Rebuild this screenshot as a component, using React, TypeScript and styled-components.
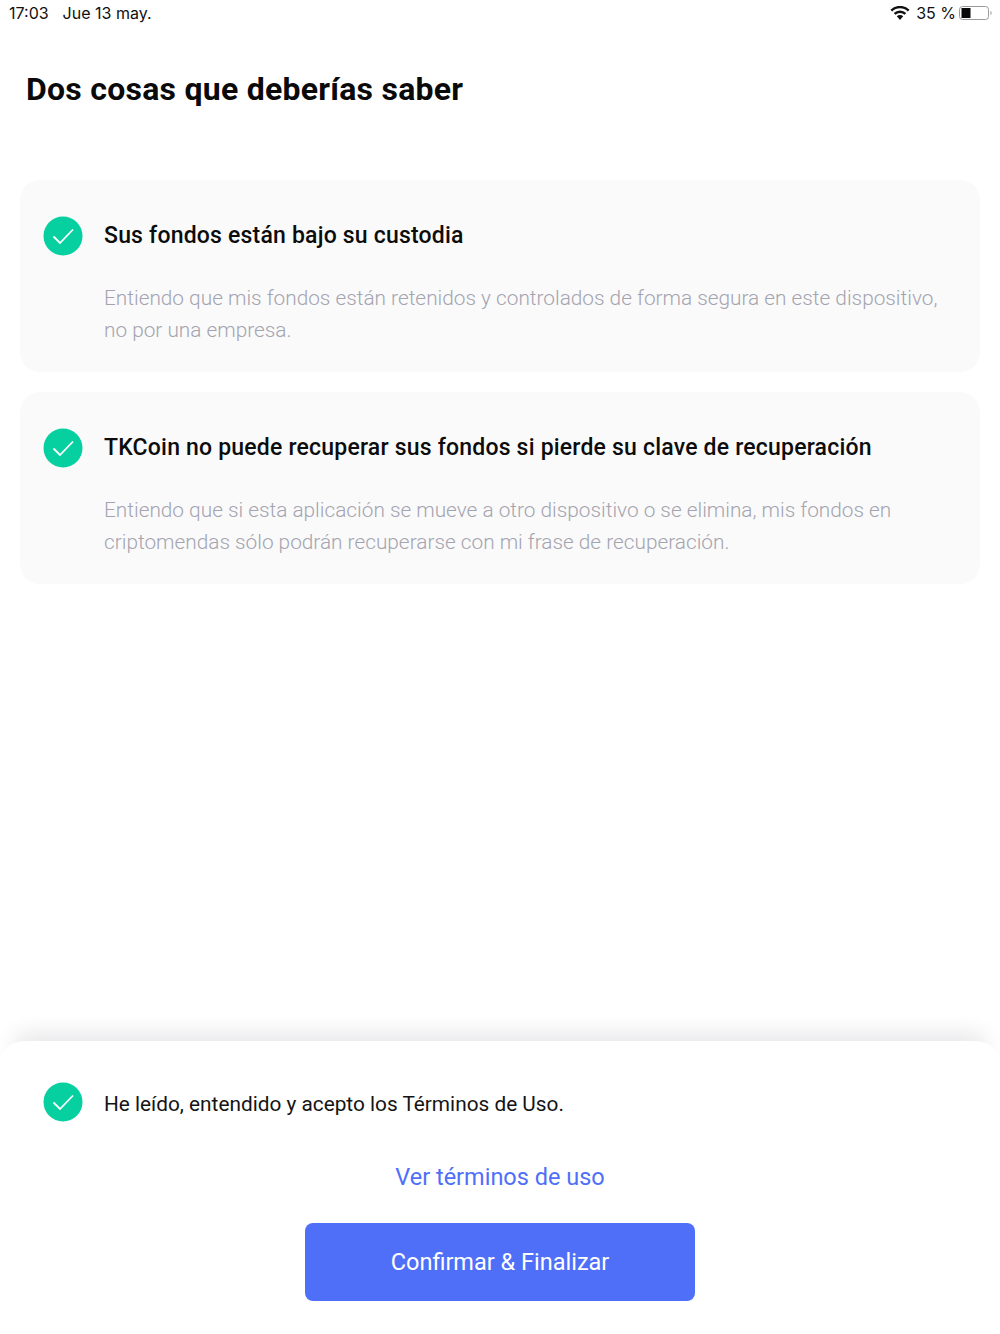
import styled, { createGlobalStyle } from "styled-components";

const GlobalStyle = createGlobalStyle`
  html, body {
    margin: 0;
    padding: 0;
    background: #fff;
  }
  * {
    box-sizing: border-box;
  }
`;

const Page = styled.div`
  width: 1000px;
  height: 1334px;
  display: flex;
  flex-direction: column;
  overflow: hidden;
  background: #fff;
  font-family: Roboto, "Liberation Sans", sans-serif;
`;

const StatusBar = styled.div`
  height: 26px;
  margin-bottom: 1px;
  padding: 0 7px 0 9px;
  display: flex;
  align-items: center;
  justify-content: space-between;
  font-family: Inter, "Liberation Sans", sans-serif;
  font-size: 16px;
  color: #111;
`;

const StatusGroup = styled.div`
  display: flex;
  align-items: center;
`;

const Clock = styled.span`
  margin-right: 14px;
`;

const Percent = styled.span`
  margin: 0 3px 0 6px;
`;

const Title = styled.h1`
  margin: 41px 0 0 26px;
  font-size: 32px;
  line-height: 42px;
  font-weight: 700;
  letter-spacing: 0.25px;
  color: #0a0a0a;
`;

const CardList = styled.div`
  margin-top: 70px;
  padding: 0 20px;
  display: flex;
  flex-direction: column;
  gap: 20px;
  flex: 1;
`;

const Card = styled.section`
  height: 192px;
  padding: 36px 23px 0;
  background: #fafafa;
  border-radius: 20px;
`;

const Row = styled.div`
  display: flex;
  align-items: center;
  gap: 21px;
`;

const CardTitle = styled.h2`
  margin: 0;
  font-size: 23px;
  line-height: 38px;
  font-weight: 500;
  letter-spacing: 0.2px;
  color: #0c0c0c;
`;

const CardText = styled.p`
  margin: 26px 0 0 61px;
  font-size: 20.8px;
  line-height: 32px;
  font-weight: 300;
  color: #a4a4b0;
`;

const Sheet = styled.footer`
  height: 293px;
  padding: 41px 43px 0;
  display: flex;
  flex-direction: column;
  align-items: stretch;
  background: #fff;
  border-radius: 24px 24px 0 0;
  box-shadow: 0 -24px 20px -15px rgba(40, 44, 60, 0.1);
`;

const AcceptText = styled.span`
  font-size: 20.8px;
  color: #141414;
  position: relative;
  top: 2px;
`;

const TermsLink = styled.a`
  margin-top: 38px;
  text-align: center;
  font-size: 23.5px;
  line-height: 34px;
  color: #4f6ff9;
`;

const ConfirmButton = styled.button`
  align-self: center;
  margin-top: 29px;
  width: 390px;
  height: 78px;
  border: 0;
  border-radius: 8px;
  background: #4f6ff9;
  color: #fff;
  font-family: inherit;
  font-size: 23.5px;
`;

const CheckBadge = () => (
  <svg width="40" height="40" viewBox="0 0 40 40" style={{ flexShrink: 0 }}>
    <circle cx="20" cy="20" r="19.5" fill="#07d0a0" />
    <path d="M10.5 20.5 L17 27 L30 13.5" fill="none" stroke="#fff" strokeWidth="1.8" />
  </svg>
);

const WifiIcon = () => (
  <svg width="20" height="14" viewBox="0 0 20 14">
    <path d="M10 14 L6.8 10.2 A4.6 4.6 0 0 1 13.2 10.2 Z" fill="#111" />
    <path d="M4.6 7.9 A7.8 7.8 0 0 1 15.4 7.9" fill="none" stroke="#111" strokeWidth="2.4" />
    <path d="M1.3 4.6 A12.4 12.4 0 0 1 18.7 4.6" fill="none" stroke="#111" strokeWidth="2.4" />
  </svg>
);

const BatteryIcon = () => (
  <svg width="34" height="16" viewBox="0 0 34 16">
    <rect x="0.5" y="1.5" width="29" height="13" rx="3" fill="none" stroke="#9a9a9a" />
    <rect x="2.5" y="3" width="9" height="10" fill="#0a0a0a" />
    <path d="M31.5 6 C33 6.3 33 9.7 31.5 10 Z" fill="#9a9a9a" />
  </svg>
);

const cards = [
  {
    title: "Sus fondos están bajo su custodia",
    text: "Entiendo que mis fondos están retenidos y controlados de forma segura en este dispositivo, no por una empresa.",
  },
  {
    title: "TKCoin no puede recuperar sus fondos si pierde su clave de recuperación",
    text: "Entiendo que si esta aplicación se mueve a otro dispositivo o se elimina, mis fondos en criptomendas sólo podrán recuperarse con mi frase de recuperación.",
  },
];

export default function App() {
  return (
    <Page>
      <GlobalStyle />
      <StatusBar>
        <StatusGroup>
          <Clock>17:03</Clock>
          <span>Jue 13 may.</span>
        </StatusGroup>
        <StatusGroup>
          <WifiIcon />
          <Percent>35 %</Percent>
          <BatteryIcon />
        </StatusGroup>
      </StatusBar>
      <Title>Dos cosas que deberías saber</Title>
      <CardList>
        {cards.map((card) => (
          <Card key={card.title}>
            <Row>
              <CheckBadge />
              <CardTitle>{card.title}</CardTitle>
            </Row>
            <CardText>{card.text}</CardText>
          </Card>
        ))}
      </CardList>
      <Sheet>
        <Row>
          <CheckBadge />
          <AcceptText>He leído, entendido y acepto los Términos de Uso.</AcceptText>
        </Row>
        <TermsLink>Ver términos de uso</TermsLink>
        <ConfirmButton>Confirmar &amp; Finalizar</ConfirmButton>
      </Sheet>
    </Page>
  );
}
